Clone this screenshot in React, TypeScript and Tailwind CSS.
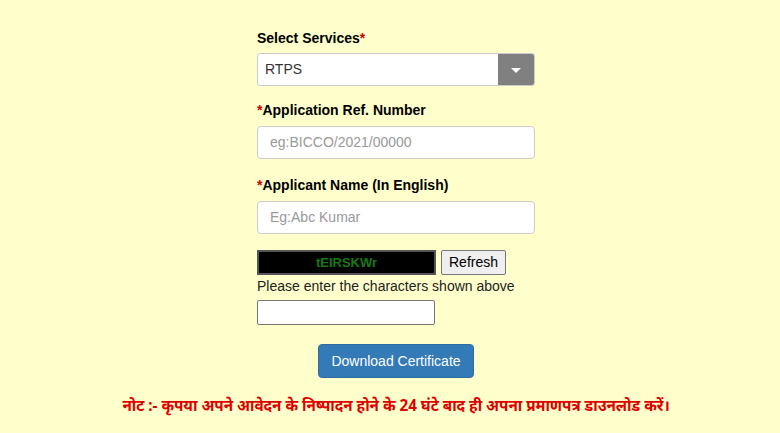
const App = () => {
  return (
    <div className="w-[780px] h-[433px] bg-[#ffffcc] overflow-hidden font-['Liberation_Sans',Arial,sans-serif] text-[14px] text-[#333]">
      <div className="w-[278px] ml-[257px] pt-[29px]">
        <label className="block font-bold text-[14px] text-black leading-[18px]">
          Select Services<span className="text-[#c00]">*</span>
        </label>
        <div className="mt-[6px] flex h-[33px] rounded-[3px] border border-[#ccc] bg-white overflow-hidden">
          <div className="flex-1 flex items-center pl-[7px] text-[14px] text-[#333]">RTPS</div>
          <div className="w-[36px] bg-[#808080] flex items-center justify-center">
            <div className="w-0 h-0 border-l-[5px] border-r-[5px] border-t-[5px] border-l-transparent border-r-transparent border-t-white mt-[2px]" />
          </div>
        </div>

        <label className="block mt-[15px] font-bold text-[14px] text-black leading-[18px]">
          <span className="text-[#c00]">*</span>Application Ref. Number
        </label>
        <div className="mt-[7px] h-[33px] rounded-[4px] border border-[#ccc] bg-white flex items-center pl-[12px] text-[14px] text-[#999]">
          eg:BICCO/2021/00000
        </div>

        <label className="block mt-[17px] font-bold text-[14px] text-black leading-[18px]">
          <span className="text-[#c00]">*</span>Applicant Name (In English)
        </label>
        <div className="mt-[7px] h-[33px] rounded-[4px] border border-[#ccc] bg-white flex items-center pl-[12px] text-[14px] text-[#999]">
          Eg:Abc Kumar
        </div>

        <div className="mt-[16px] flex items-center gap-[5px]">
          <div className="w-[179px] h-[25px] bg-black border-2 border-[#555] flex items-center justify-center font-bold text-[13px] text-[#157a15]">
            tEIRSKWr
          </div>
          <button className="h-[25px] px-[7px] border border-[#767676] rounded-[2px] bg-[#efefef] text-[14px] text-black">
            Refresh
          </button>
        </div>
        <div className="mt-[2px] text-[14px] text-[#222] leading-[18px]">Please enter the characters shown above</div>
        <div className="mt-[5px] w-[178px] h-[25px] bg-white border border-[#767676] rounded-[2px]" />

        <div className="mt-[19px] flex">
          <button className="ml-[61px] h-[34px] w-[156px] rounded-[4px] bg-[#337ab7] border border-[#2e6da4] text-white text-[14px]">
            Download Certificate
          </button>
        </div>
      </div>
      <div className="mt-[16px] text-center text-[#dd0000] font-bold text-[15.2px] font-['Noto_Sans','Lohit_Devanagari','Noto_Sans_Devanagari',sans-serif] pl-[12px]">
        नोट :- कृपया अपने आवेदन के निष्पादन होने के 24 घंटे बाद ही अपना प्रमाणपत्र डाउनलोड करें।
      </div>
    </div>
  );
};

export default App;
